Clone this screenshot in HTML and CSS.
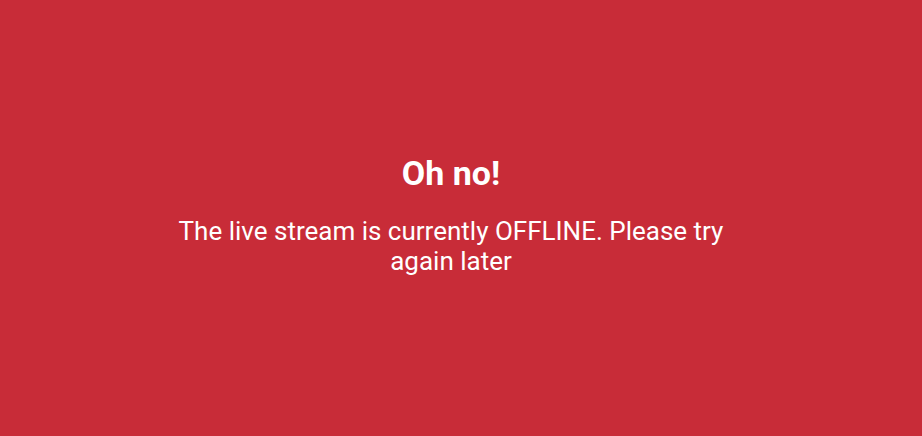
FILE: index.html
```html
<!DOCTYPE html>
<html>
<head>
<meta charset="utf-8">
<link rel="stylesheet" href="styles.css">
</head>
<body>
<main class="page">
  <div class="message">
    <h1 class="title">Oh no!</h1>
    <p class="text">The live stream is currently OFFLINE. Please try again later</p>
  </div>
</main>
</body>
</html>
```

FILE: styles.css
```css
html, body {
  margin: 0;
  padding: 0;
  height: 100%;
}
body {
  background: #c82c38;
  font-family: Roboto, "Liberation Sans", sans-serif;
  color: #ffffff;
}
.page {
  height: 100%;
  display: flex;
  align-items: center;
  justify-content: center;
  padding: 0 20px 8px 0;
  box-sizing: border-box;
}
.message {
  width: 570px;
  text-align: center;
}
.title {
  margin: 0 0 23px;
  font-size: 34px;
  font-weight: 700;
  line-height: 40px;
}
.text {
  margin: 0;
  font-size: 26px;
  font-weight: 400;
  line-height: 30px;
}
```
